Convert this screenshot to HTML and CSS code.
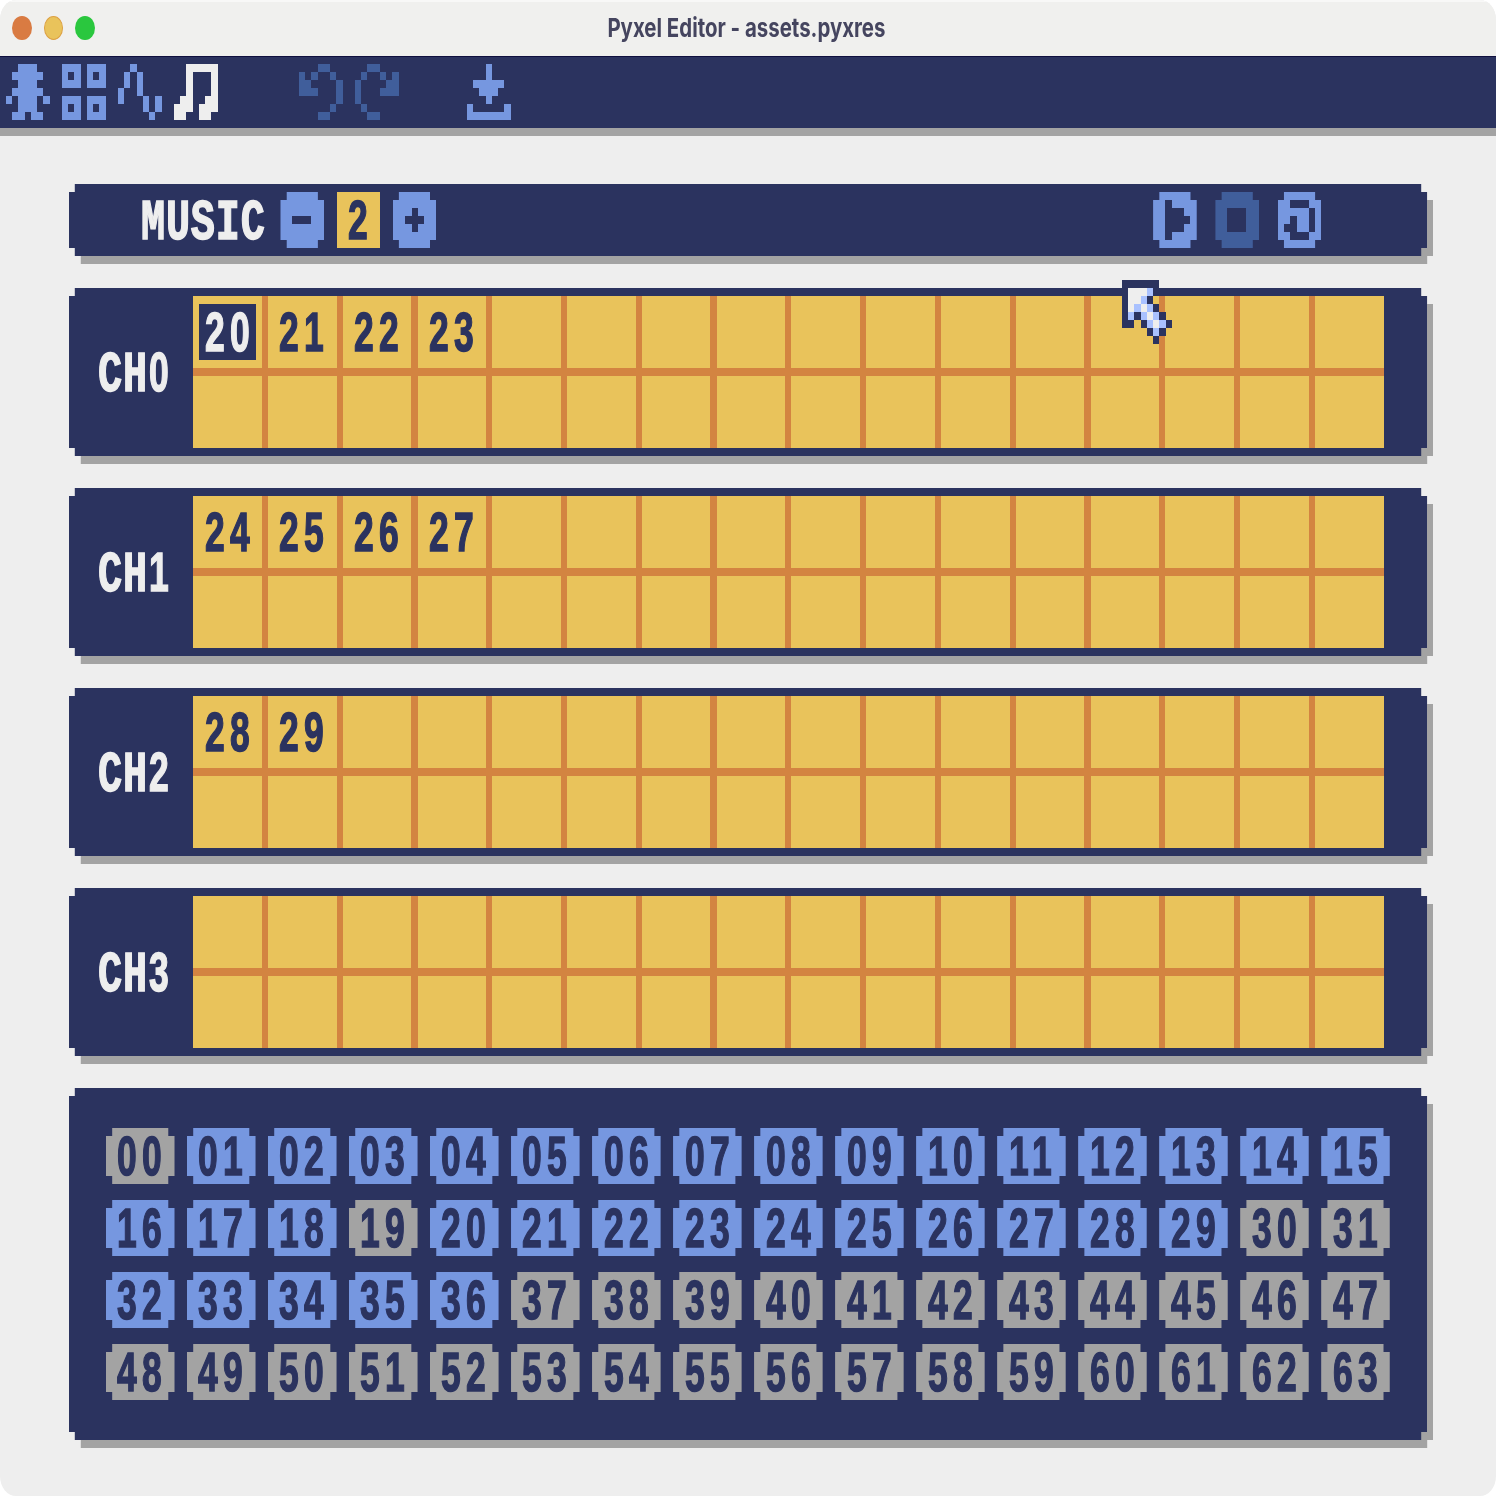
FILE: index.html
```html
<!DOCTYPE html>
<html lang="en">
<head>
<meta charset="utf-8">
<title>Pyxel Editor - assets.pyxres</title>
<link rel="stylesheet" href="styles.css">
</head>
<body>
<div class="window">
  <header class="titlebar">
    <div class="lights"><i class="light close"></i><i class="light minimize"></i><i class="light maximize"></i></div>
    <h1 class="title">Pyxel Editor - assets.pyxres</h1>
  </header>

  <nav class="toolbar">
    <svg class="icon" viewBox="0 0 7 7" preserveAspectRatio="none"><path d="M2 .5h3M1 1.5h5M2 2.5h3M1 3.5h5M0 4.5h1M2 4.5h3M6 4.5h1M2 5.5h3M1 6.5h2M4 6.5h2"/></svg>
    <svg class="icon" viewBox="0 0 7 7" preserveAspectRatio="none"><path d="M0 .5h3M4 .5h3M0 1.5h1M2 1.5h1M4 1.5h1M6 1.5h1M0 2.5h3M4 2.5h3M0 4.5h3M4 4.5h3M0 5.5h1M2 5.5h1M4 5.5h1M6 5.5h1M0 6.5h3M4 6.5h3"/></svg>
    <svg class="icon" viewBox="0 0 7 7" preserveAspectRatio="none"><path d="M2 .5h1M1 1.5h1M3 1.5h1M1 2.5h1M3 2.5h1M0 3.5h1M3 3.5h1M0 4.5h1M4 4.5h1M6 4.5h1M4 5.5h1M6 5.5h1M5 6.5h1"/></svg>
    <svg class="icon active" viewBox="0 0 7 7" preserveAspectRatio="none"><path d="M2 .5h5M2 1.5h1M6 1.5h1M2 2.5h1M6 2.5h1M2 3.5h1M6 3.5h1M1 4.5h2M5 4.5h2M0 5.5h3M4 5.5h3M0 6.5h2M4 6.5h2"/></svg>
    <svg class="icon disabled undo" viewBox="0 0 7 7" preserveAspectRatio="none"><path d="M3 .5h2M0 1.5h1M2 1.5h1M5 1.5h1M0 2.5h2M6 2.5h1M0 3.5h3M6 3.5h1M6 4.5h1M5 5.5h1M3 6.5h2"/></svg>
    <svg class="icon disabled" viewBox="0 0 7 7" preserveAspectRatio="none"><path d="M2 .5h2M1 1.5h1M4 1.5h1M6 1.5h1M0 2.5h1M5 2.5h2M0 3.5h1M4 3.5h3M0 4.5h1M1 5.5h1M2 6.5h2"/></svg>
    <svg class="icon save" viewBox="0 0 7 7" preserveAspectRatio="none"><path d="M3 .5h1M3 1.5h1M1 2.5h5M2 3.5h3M3 4.5h1M0 5.5h1M6 5.5h1M0 6.5h7"/></svg>
  </nav>

  <main class="panels">
    <section class="shadow">
      <div class="panel controls">
        <span class="word">MUSIC</span>
        <button class="btn"><svg class="icon" viewBox="0 0 7 7" preserveAspectRatio="none"><path d="M2 3.5h3"/></svg></button>
        <span class="value"><span class="num">2</span></span>
        <button class="btn"><svg class="icon" viewBox="0 0 7 7" preserveAspectRatio="none"><path d="M3 2.5h1M2 3.5h3M3 4.5h1"/></svg></button>
        <button class="btn play"><svg class="icon" viewBox="0 0 7 7" preserveAspectRatio="none"><path d="M2 1.5h1M2 2.5h3M2 3.5h4M2 4.5h3M2 5.5h1"/></svg></button>
        <button class="btn transport off"><svg class="icon" viewBox="0 0 7 7" preserveAspectRatio="none"><path d="M2 2.5h3M2 3.5h3M2 4.5h3"/></svg></button>
        <button class="btn transport"><svg class="icon" viewBox="0 0 7 7" preserveAspectRatio="none"><path d="M2 1.5h3M5 2.5h1M2 3.5h1M5 3.5h1M1 4.5h2M5 4.5h1M2 5.5h3"/></svg></button>
      </div>
    </section>
    <section class="shadow"><div class="panel channel"><span class="label"><span class="word">CH</span><span class="num">0</span></span><div class="track" data-sounds="20,21,22,23" data-cursor="0"></div></div></section>
    <section class="shadow"><div class="panel channel"><span class="label"><span class="word">CH</span><span class="num">1</span></span><div class="track" data-sounds="24,25,26,27"></div></div></section>
    <section class="shadow"><div class="panel channel"><span class="label"><span class="word">CH</span><span class="num">2</span></span><div class="track" data-sounds="28,29"></div></div></section>
    <section class="shadow"><div class="panel channel"><span class="label"><span class="word">CH</span><span class="num">3</span></span><div class="track" data-sounds=""></div></div></section>
    <section class="shadow"><div class="panel picker"></div></section>
  </main>

  <svg class="cursor" viewBox="0 0 8 8" preserveAspectRatio="none">
    <path class="outline" d="M0 .5h6M0 1.5h1M5 1.5h1M0 2.5h1M4 2.5h1M0 3.5h1M5 3.5h1M0 4.5h1M2 4.5h1M6 4.5h1M0 5.5h2M3 5.5h1M7 5.5h1M4 6.5h1M6 6.5h1M5 7.5h1"/>
    <path class="fill" d="M1 1.5h3M1 2.5h2M1 3.5h1M3 3.5h1M4 4.5h1M5 5.5h1"/>
    <path class="shade" d="M4 1.5h1M3 2.5h1M2 3.5h1M4 3.5h1M1 4.5h1M3 4.5h1M5 4.5h1M4 5.5h1M6 5.5h1M5 6.5h1"/>
  </svg>
</div>
<script src="script.js"></script>
</body>
</html>
```

FILE: styles.css
```css
:root {
  /* one logical pixel is --u wide and --v high */
  --u: calc(1496px / 240);
  --v: 8px;
  --navy: #2b335f;
  --blue: #7697e0;
  --dim: #405e9b;
  --yellow: #e9c35b;
  --orange: #d38441;
  --gray: #a3a3a3;
  --white: #eeeeee;
}

* { box-sizing: border-box; }

body { margin: 0; background: #fff; }

.window {
  position: relative;
  width: 1496px;
  height: 1496px;
  overflow: hidden;
  border-radius: 16px / 20px;
  background: var(--white);
}

.titlebar {
  display: grid;
  grid-template-columns: 1fr auto 1fr;
  align-items: center;
  height: 56px;
  padding: 0 12px 2px;
  background: #f0f0ee;
  border-top: 2px solid #f8f8f7;
}

.lights { display: flex; gap: 12px; }
.light { width: 19.5px; height: 24px; border-radius: 50%; }
.close { background: #d97b42; }
.minimize { background: var(--yellow); border: 1px solid #dda246; }
.maximize { background: #2ac73e; }

.title {
  margin: 0 -40px;
  padding: 0 3px 1px 0;
  font: 700 26px/29px Inter, sans-serif;
  color: #45455f;
  white-space: nowrap;
  transform: scaleX(.785);
}

.toolbar {
  display: flex;
  gap: calc(2 * var(--u));
  height: 80px;
  padding: var(--v) var(--u) 0;
  background: var(--navy);
  border-bottom: var(--v) solid var(--gray);
  box-shadow: inset 0 1px #10103f;
  color: var(--blue);
}

.icon {
  flex: none;
  display: block;
  width: calc(7 * var(--u));
  height: calc(7 * var(--v));
  stroke: currentColor;
  stroke-width: 1;
  fill: none;
  shape-rendering: crispEdges;
}
.active { color: var(--white); }
.disabled { color: var(--dim); }
.undo { margin-left: calc(11 * var(--u)); }
.save { margin-left: calc(9 * var(--u)); }

.panels {
  display: flex;
  flex-direction: column;
  gap: 32px;
  padding: 48px calc(11 * var(--u));
}

.shadow { filter: drop-shadow(var(--u) var(--v) 0 var(--gray)); }

.panel, .btn, .key {
  clip-path: polygon(
    var(--u) 0, calc(100% - var(--u)) 0, calc(100% - var(--u)) var(--v), 100% var(--v),
    100% calc(100% - var(--v)), calc(100% - var(--u)) calc(100% - var(--v)), calc(100% - var(--u)) 100%, var(--u) 100%,
    var(--u) calc(100% - var(--v)), 0 calc(100% - var(--v)), 0 var(--v), var(--u) var(--v));
}
.panel { background: var(--navy); }

.num, .word {
  display: block;
  height: 40px;
  white-space: nowrap;
  transform-origin: 0 50%;
  -webkit-text-stroke: 1.5px currentColor;
}
.num {
  font-family: "Liberation Sans", sans-serif;
  font-weight: 700;
  font-size: 55px;
  line-height: 40px;
  letter-spacing: 8.1px;
  transform: translateX(-1px) scaleX(.645);
}
.word {
  font-family: "Liberation Mono", monospace;
  font-weight: 700;
  font-size: 58px;
  line-height: 47px;
  letter-spacing: 1.2px;
  transform: translateX(-2px) scaleX(.692);
}

.controls {
  display: flex;
  height: calc(9 * var(--v));
  padding: var(--v) 0 0 calc(12 * var(--u));
  color: var(--white);
}
.controls > .word { width: calc(22 * var(--u)); margin-top: var(--v); }
.btn {
  flex: none;
  width: calc(7 * var(--u));
  height: calc(7 * var(--v));
  padding: 0;
  border: 0;
  background: var(--blue);
  color: var(--navy);
}
.off { background: var(--dim); }
.play { margin-left: calc(115 * var(--u)); }
.transport { margin-left: calc(3 * var(--u)); }
.value {
  width: calc(7 * var(--u));
  height: calc(7 * var(--v));
  margin: 0 calc(2 * var(--u));
  padding: var(--v) calc(2 * var(--u));
  background: var(--yellow);
  color: var(--navy);
}

.channel {
  display: flex;
  height: calc(21 * var(--v));
  padding: var(--v) calc(7 * var(--u)) var(--v) calc(5 * var(--u));
}
.label {
  display: flex;
  width: calc(15 * var(--u));
  padding-top: calc(7 * var(--v));
  color: var(--white);
}
.label .word { width: calc(8 * var(--u)); }
.track {
  display: grid;
  grid-template-columns: repeat(16, calc(11 * var(--u)));
  grid-template-rows: repeat(2, calc(9 * var(--v)));
  gap: var(--v) var(--u);
  background: var(--orange);
}
.slot { padding: var(--v) var(--u); background: var(--yellow); color: var(--navy); }
.entry {
  width: calc(9 * var(--u));
  height: calc(7 * var(--v));
  padding: var(--v) var(--u);
}
.selected { background: var(--navy); color: var(--white); }

.picker {
  display: grid;
  grid-template-columns: repeat(16, calc(11 * var(--u)));
  grid-auto-rows: calc(7 * var(--v));
  gap: calc(2 * var(--v)) calc(2 * var(--u));
  height: calc(44 * var(--v));
  padding: calc(5 * var(--v)) calc(6 * var(--u));
}
.key { padding: var(--v) calc(2 * var(--u)); background: var(--blue); color: var(--navy); }
.empty { background: var(--gray); }

.cursor {
  position: absolute;
  left: calc(180 * var(--u));
  top: 280px;
  width: calc(8 * var(--u));
  height: calc(8 * var(--v));
  shape-rendering: crispEdges;
}
.outline { stroke: var(--navy); }
.fill { stroke: var(--white); }
.shade { stroke: #a9c1ff; }
```

FILE: script.js
```js
function numeral(text) {
  const el = document.createElement("span");
  el.className = "num";
  el.textContent = text;
  return el;
}

// Each channel holds 32 slots, in two rows of 16.
document.querySelectorAll(".track").forEach((track) => {
  const sounds = track.dataset.sounds ? track.dataset.sounds.split(",") : [];
  for (let i = 0; i < 32; i++) {
    const slot = document.createElement("div");
    slot.className = "slot";
    if (sounds[i]) {
      const entry = document.createElement("div");
      entry.className = track.dataset.cursor === String(i) ? "entry selected" : "entry";
      entry.append(numeral(sounds[i]));
      slot.append(entry);
    }
    track.append(slot);
  }
});

// Sounds without any notes are shown gray.
const picker = document.querySelector(".picker");
for (let i = 0; i < 64; i++) {
  const key = document.createElement("div");
  const empty = i === 0 || i === 19 || i === 30 || i === 31 || i > 36;
  key.className = empty ? "key empty" : "key";
  key.append(numeral(String(i).padStart(2, "0")));
  picker.append(key);
}
```
